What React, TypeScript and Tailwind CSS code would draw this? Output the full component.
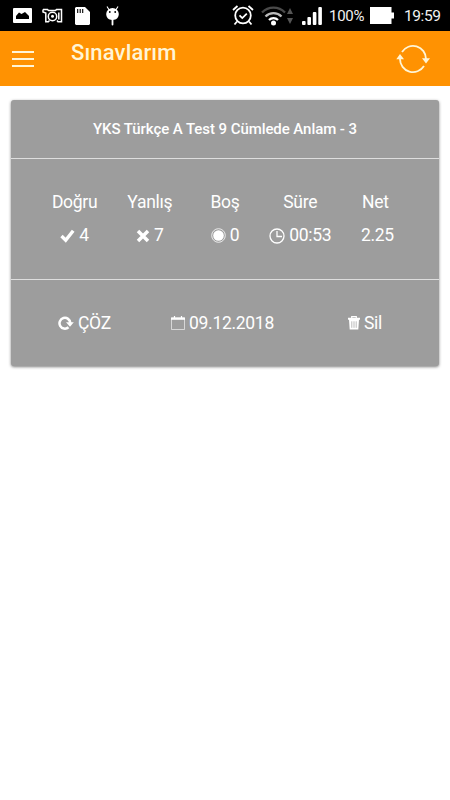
import {ReactNode} from 'react';

function StatusBar() {
  return (
    <div className="flex h-[31px] items-center bg-black pr-[10px] pl-[13px] text-[#f2f2f2]">
      <svg className="h-[15px] w-[19px]" viewBox="0 0 19 15">
        <rect width="19" height="15" rx="1" fill="#fff" />
        <path d="M3 11V8l3-3.5 2.5 1.5L12 4l4 4v3z" fill="#000" />
      </svg>
      <svg
        className="ml-[10px] h-[16px] w-[21px]"
        viewBox="0 0 21 16"
        fill="none"
        stroke="#fff"
        strokeWidth="1.5"
      >
        <path d="M1 1.5h4.500l1 1h7l1-1h5v12.300h-3.500l-1-1.300M1 1.500V4l2.800 1v8.800h2.500L7.500 12.500" />
        <circle cx="10.5" cy="8.5" r="4.2" />
        <circle cx="10.5" cy="8.200" r="1.5" fill="#fff" stroke="none" />
        <path d="M16.800 4.500v7" />
      </svg>
      <svg className="ml-[12px] h-[18px] w-[15px]" viewBox="0 0 15 18">
        <path d="M1 0h9l5 5v12l-1 1H1l-1-1V1z" fill="#fff" />
        <path d="M2.7 2v4M5.2 2v4M7.7 2v4" stroke="#000" strokeWidth="1.1" />
      </svg>
      <svg
        className="ml-[15px] h-[20px] w-[15px]"
        viewBox="0 0 15 20"
        fill="#fff"
      >
        <path d="M2 .5 4.2 4M13 .5 10.8 4" stroke="#fff" strokeWidth="1.1" />
        <path d="M1.2 8a6.3 6 0 0 1 12.6 0c0 3-2 6-6.3 6S1.2 11 1.2 8z" />
        <circle cx="4.8" cy="6" r=".9" fill="#000" />
        <circle cx="10.2" cy="6" r=".9" fill="#000" />
        <path d="M6.6 13h1.8v5.5a.9.9 0 0 1-1.8 0z" />
      </svg>
      <svg
        className="ml-auto h-[21px] w-[22px]"
        viewBox="0 0 22 21"
        fill="none"
        stroke="#fff"
        strokeWidth="1.8"
      >
        <circle cx="11" cy="10.5" r="7.8" />
        <path d="m7.5 10.3 2.8 2.8 4.5-4.5M1 5l4.5-4M21 5l-4.5-4M5 16.5l-2.5 3M17 16.5l2.5 3" />
      </svg>
      <svg
        className="ml-[7px] h-[21px] w-[25px]"
        viewBox="0 0 25 21"
        fill="none"
        strokeWidth="2.3"
      >
        <path d="M1 7.5a16 16 0 0 1 23 0" stroke="#4a4a4a" />
        <path d="M4.5 11.5a11.3 11.3 0 0 1 16 0" stroke="#bbb" />
        <path d="M8 15a6.4 6.4 0 0 1 9 0" stroke="#fff" />
        <circle cx="12.5" cy="18" r="2.5" fill="#fff" />
      </svg>
      <svg
        className="ml-[1px] h-[16px] w-[6px]"
        viewBox="0 0 6 16"
        fill="#555"
      >
        <path d="m3 0 3 6H0zM3 16l3-6H0z" />
      </svg>
      <svg
        className="ml-[9px] h-[18px] w-[20px]"
        viewBox="0 0 20 18"
        fill="#fff"
      >
        <rect y="14" width="3.6" height="4" rx="1" />
        <rect x="5.4" y="10" width="3.6" height="8" rx="1" />
        <rect x="10.8" y="5" width="3.6" height="13" rx="1" />
        <rect x="16.3" width="3.6" height="18" rx="1" />
      </svg>
      <span className="mt-[2px] ml-[7px] w-[36px] text-[15px] tracking-[-0.3px]">
        100%
      </span>
      <svg
        className="ml-[5px] h-[17px] w-[24px]"
        viewBox="0 0 24 17"
        fill="#fff"
      >
        <path d="M0 0h21.5v5.5H24v6h-2.5V17H0z" />
      </svg>
      <span className="mt-[2px] ml-[10px] w-[36px] text-[15.5px] tracking-[-0.4px]">
        19:59
      </span>
    </div>
  );
}

function Header() {
  return (
    <header className="flex h-[55px] bg-[#ff9202] text-[#fff5d6]">
      <div className="mt-[20px] ml-[12px] flex h-[16px] w-[22px] flex-col justify-between">
        <span className="h-[2px] bg-current" />
        <span className="h-[2px] bg-current" />
        <span className="h-[2px] bg-current" />
      </div>
      <h1 className="mt-[8px] ml-[37px] text-[22px] leading-[28px] font-medium tracking-[0.15px]">
        Sınavlarım
      </h1>
      <svg
        className="mt-[12px] mr-[20px] ml-auto h-[32px] w-[34px]"
        viewBox="0 0 34 32"
        fill="none"
        stroke="currentColor"
        strokeWidth="1.8"
      >
        <path d="M6 9A13 13 0 0 1 30 16M28 23A13 13 0 0 1 4 16" />
        <path
          d="m4 11 4 5.2H.3zM30 20.5l4-5.2h-8z"
          fill="currentColor"
          stroke="none"
        />
      </svg>
    </header>
  );
}

function CheckIcon() {
  return (
    <svg className="h-[14px] w-[15px]" viewBox="0 0 15 14">
      <path
        d="m1.5 7 4.2 4.2 7.5-9.5"
        fill="none"
        stroke="currentColor"
        strokeWidth="3.4"
      />
    </svg>
  );
}

function CrossIcon() {
  return (
    <svg className="h-[14px] w-[14px]" viewBox="0 0 14 14">
      <path
        d="m2 2 10 10M12 2 2 12"
        stroke="currentColor"
        strokeWidth="3.5"
      />
    </svg>
  );
}

function RadioIcon() {
  return (
    <svg className="h-[15px] w-[15px]" viewBox="0 0 15 15">
      <circle
        cx="7.5"
        cy="7.5"
        r="6.8"
        fill="none"
        stroke="currentColor"
        strokeWidth=".8"
      />
      <circle cx="7.5" cy="7.5" r="5.3" fill="currentColor" />
    </svg>
  );
}

function ClockIcon() {
  return (
    <svg
      className="h-[16px] w-[16px]"
      viewBox="0 0 16 16"
      fill="none"
      stroke="currentColor"
      strokeWidth="1.3"
    >
      <circle cx="8" cy="8" r="7" />
      <path d="M8 3v5.5h5" />
    </svg>
  );
}

function RetryIcon() {
  return (
    <svg className="h-[14px] w-[16px]" viewBox="0 0 16 14">
      <path
        d="M10.5 11.3A5.4 5.4 0 1 1 12.3 7"
        fill="none"
        stroke="currentColor"
        strokeWidth="2.5"
      />
      <path d="M8 6.3h7.8L12 10.8z" fill="currentColor" />
    </svg>
  );
}

function CalendarIcon() {
  return (
    <svg
      className="h-[14px] w-[14px]"
      viewBox="0 0 14 14"
      fill="none"
      stroke="currentColor"
    >
      <path d="M.5 1.5h13v12H.5z" strokeWidth=".6" />
      <path d="M0 2.8h14" strokeWidth="2" />
      <path d="M3.5 0v2M10.5 0v2" strokeWidth="1.2" />
    </svg>
  );
}

function TrashIcon() {
  return (
    <svg className="h-[14px] w-[12px]" viewBox="0 0 12 14">
      <path
        d="M3.7 2V.7h4.6V2"
        fill="none"
        stroke="currentColor"
        strokeWidth="1.2"
      />
      <path d="M0 1.8h12v2H0zM1 3.5h10L10.3 13.5H1.7z" fill="currentColor" />
      <path
        d="M3.8 5.3v6.5M6 5.3v6.5M8.2 5.3v6.5"
        stroke="#9d9d9d"
        strokeWidth=".7"
      />
    </svg>
  );
}

function Stat({
  label,
  value,
  icon,
}: {
  label: string;
  value: string;
  icon?: ReactNode;
}) {
  return (
    <div className="flex flex-col items-center">
      <span className="leading-[34px]">{label}</span>
      <span
        className={`flex items-center gap-[4px] leading-[33px] ${icon ? '' : 'pl-[4px]'}`}
      >
        {icon}
        {value}
      </span>
    </div>
  );
}

function Action({icon, label}: {icon: ReactNode; label: string}) {
  return (
    <button className="flex items-center gap-[4px]">
      {icon}
      {label}
    </button>
  );
}

export default function App() {
  return (
    <div className="min-h-screen bg-white font-['Roboto',sans-serif]">
      <StatusBar />
      <Header />
      <main className="px-[11px] pt-[14px]">
        <section className="h-[266px] rounded-[3px] bg-[#9d9d9d] text-[17.5px] tracking-[-0.3px] text-white shadow-[0_1px_3px_rgba(0,0,0,0.5)]">
          <h2 className="flex h-[59px] items-center justify-center border-b border-[#dedede] text-[15px] font-medium tracking-[-0.07px]">
            YKS Türkçe A Test 9 Cümlede Anlam - 3
          </h2>
          <div className="grid h-[121px] grid-cols-5 border-b border-[#dedede] px-[26px] pt-[26px]">
            <Stat label="Doğru" value="4" icon={<CheckIcon />} />
            <Stat label="Yanlış" value="7" icon={<CrossIcon />} />
            <Stat label="Boş" value="0" icon={<RadioIcon />} />
            <Stat label="Süre" value="00:53" icon={<ClockIcon />} />
            <Stat label="Net" value="2.25" />
          </div>
          <div className="grid h-[86px] grid-cols-[113px_177px_auto] pl-[47px]">
            <Action icon={<RetryIcon />} label="ÇÖZ" />
            <Action icon={<CalendarIcon />} label="09.12.2018" />
            <Action icon={<TrashIcon />} label="Sil" />
          </div>
        </section>
      </main>
    </div>
  );
}
